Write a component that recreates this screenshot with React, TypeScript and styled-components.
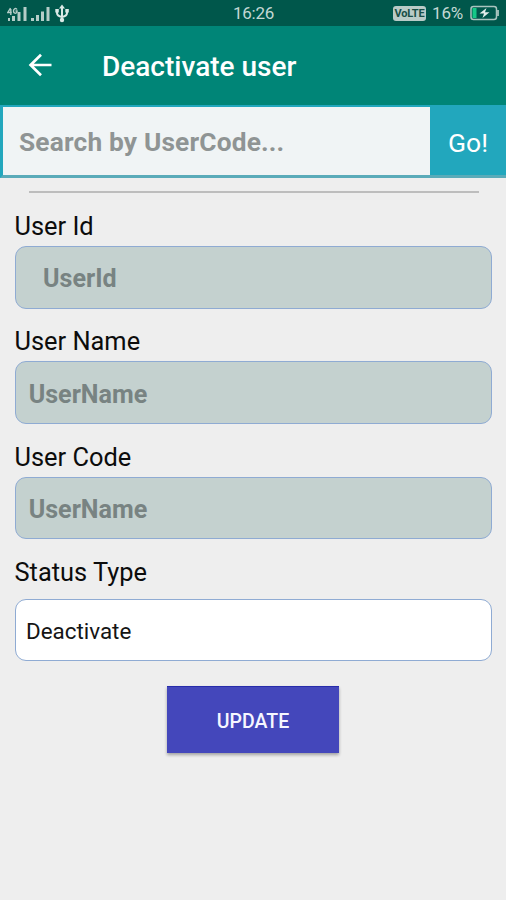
import React from "react";
import styled, { createGlobalStyle } from "styled-components";

const GlobalStyle = createGlobalStyle`
  * { box-sizing: border-box; }
  body { margin: 0; background: #eeeeee; font-family: Roboto, "Liberation Sans", sans-serif; }
`;

const Screen = styled.div`
  width: 506px;
  height: 900px;
  background: #eeeeee;
  overflow: hidden;
  display: flex;
  flex-direction: column;
`;

const StatusBar = styled.header`
  height: 26px;
  flex: none;
  background: #00574b;
  color: #c3d8d4;
  display: grid;
  grid-template-columns: 1fr auto 1fr;
  align-items: center;
  padding: 0 6px 0 7px;
  font-size: 17px;
  line-height: 26px;
`;

const StatusGroup = styled.div<{ $end?: boolean }>`
  display: flex;
  align-items: center;
  justify-content: ${(p) => (p.$end ? "flex-end" : "flex-start")};
`;

const Clock = styled.span`
  letter-spacing: -0.3px;
`;

const Percent = styled.span`
  margin: 0 7px 0 6px;
  letter-spacing: -0.2px;
`;

const AppBar = styled.div`
  height: 79px;
  flex: none;
  background: #008577;
  display: flex;
  align-items: center;
  padding: 0 0 1px 28px;
`;

const BackButton = styled.button`
  border: 0;
  background: none;
  padding: 0;
  width: 74px;
  height: 24px;
  display: flex;
`;

const Title = styled.h1`
  margin: 3px 0 0;
  color: #fff;
  font-size: 28px;
  font-weight: 500;
  line-height: 36px;
`;

const SearchBar = styled.div`
  height: 73px;
  flex: none;
  display: flex;
  background: #22a7bd;
  border: 2px solid #22a7bd;
  border-width: 2px 0 3px 3px;
  border-bottom-color: #5aabb9;
`;

const SearchInput = styled.input`
  width: 427px;
  border: 0;
  outline: 0;
  background: #f0f4f5;
  padding: 2px 16px 0;
  font: 700 26.3px Roboto, sans-serif;
  letter-spacing: 0.17px;
  &::placeholder { color: #8f9494; opacity: 1; }
`;

const GoButton = styled.button`
  flex: 1;
  border: 0;
  background: #22a7bd;
  color: #fff;
  padding: 2px 0 0;
  font: 400 26.5px Roboto, sans-serif;
`;

const Divider = styled.hr`
  width: 450px;
  height: 2px;
  flex: none;
  border: 0;
  margin: 13px 0 0 29px;
  background: #bdbdbd;
`;

const Form = styled.form`
  display: flex;
  flex-direction: column;
  padding: 15px 14px 0 15px;
`;

const Label = styled.label<{ $gap: number }>`
  color: #0c0c0c;
  font-size: 25.4px;
  line-height: 36px;
  height: 36px;
  margin-bottom: ${(p) => p.$gap}px;
  margin-left: -0.5px;
`;

const Field = styled.input<{ $indent: number; $plain?: boolean }>`
  height: 62.5px;
  width: 100%;
  margin: 0 0 14.8px;
  border: 1.5px solid #8fabd3;
  border-radius: 11px;
  outline: 0;
  color: #151515;
  background: ${(p) => (p.$plain ? "#ffffff" : "#c4d1cf")};
  padding: ${(p) => (p.$plain ? 2 : 3)}px 10px 0 ${(p) => p.$indent}px;
  font: ${(p) => (p.$plain ? "400 22.4px" : "700 25.1px")} Roboto, sans-serif;
  &::placeholder { color: #788382; opacity: 1; }
`;

const UpdateButton = styled.button`
  align-self: center;
  width: 172px;
  height: 67px;
  margin: 10.2px 1px 0 0;
  border: 0;
  border-top: 1px solid #272cab;
  background: #4447bb;
  color: #f6f6ff;
  font: 500 19.5px Roboto, sans-serif;
  padding: 2px 0 0;
  box-shadow: 0 2px 3px rgba(0, 0, 0, 0.32);
`;

const SignalIcons = () => (
  <svg width="64" height="22" viewBox="7 1 64 22" fill="#b5cdc8">
    <path d="M8 17h2v3H8zM12 15h3v5h-3zM17.500 11h3v9h-3zM23.500 6h3v14h-3z" />
    <path d="M31 17h3v3h-3zM36 14h3v6h-3zM41 10.500h3v9.500h-3zM46.500 6h3v14h-3z" />
    <path d="M10.500 7 7.800 11.500h4M10.800 8v6M17 8.500c-1-2-3.500-1-3.500 1.500s2.500 3 3.500 1v-1h-1.500" fill="none" stroke="#b5cdc8" strokeWidth="1.400" />
    <g fill="none" stroke="#dbe9e6" strokeWidth="2">
      <path d="M62 6v13M57 9v3q0 3 5 4 5-1 5-4V9" />
    </g>
    <path d="m62 3.500 3 4h-6zM55.300 8h3.500v3.500h-3.500zM65.300 8h3.500v3.500h-3.500z" fill="#dbe9e6" />
    <circle cx="62" cy="19" r="2.200" fill="#dbe9e6" />
  </svg>
);

const VolteBadge = styled.span`
  width: 33px;
  height: 15px;
  border-radius: 3px;
  background: #b9cbc7;
  color: #174f46;
  font-size: 11px;
  font-weight: 700;
  line-height: 16px;
  text-align: center;
  letter-spacing: -0.2px;
`;

const BatteryIcon = () => (
  <svg width="30" height="16" viewBox="0 0 30 16">
    <rect x="1" y="1.500" width="25.500" height="13" rx="2.500" fill="none" stroke="#a9c4be" strokeWidth="1.500" />
    <path d="M28 5v6" stroke="#a9c4be" strokeWidth="1.800" />
    <path d="M2.500 3h4v10h-4z" fill="#14c887" />
    <path d="m16.500 3-7 5.500h4.500L12.500 13l7-5.800H15z" fill="#e2eeeb" />
  </svg>
);

const BackArrow = () => (
  <svg width="24" height="24" viewBox="0 0 24 24" fill="none" stroke="#fff" strokeWidth="2.700">
    <path d="M23.500 12H2.500M13 1.800 2.600 12 13 22.200" />
  </svg>
);

const fields = [
  { id: "user-id", label: "User Id", placeholder: "UserId", indent: 27 },
  { id: "user-name", label: "User Name", placeholder: "UserName", indent: 12.7 },
  { id: "user-code", label: "User Code", placeholder: "UserName", indent: 12.7 },
];

export default function App() {
  return (
    <Screen>
      <GlobalStyle />
      <StatusBar>
        <StatusGroup><SignalIcons /></StatusGroup>
        <Clock>16:26</Clock>
        <StatusGroup $end>
          <VolteBadge>VoLTE</VolteBadge>
          <Percent>16%</Percent>
          <BatteryIcon />
        </StatusGroup>
      </StatusBar>
      <AppBar>
        <BackButton type="button" aria-label="Back"><BackArrow /></BackButton>
        <Title>Deactivate user</Title>
      </AppBar>
      <SearchBar>
        <SearchInput placeholder="Search by UserCode..." />
        <GoButton type="button">Go!</GoButton>
      </SearchBar>
      <Divider />
      <Form>
        {fields.map((f) => (
          <React.Fragment key={f.id}>
            <Label htmlFor={f.id} $gap={2}>{f.label}</Label>
            <Field id={f.id} placeholder={f.placeholder} $indent={f.indent} readOnly />
          </React.Fragment>
        ))}
        <Label htmlFor="status" $gap={8.8}>Status Type</Label>
        <Field id="status" $indent={10} $plain defaultValue="Deactivate" />
        <UpdateButton type="button">UPDATE</UpdateButton>
      </Form>
    </Screen>
  );
}
